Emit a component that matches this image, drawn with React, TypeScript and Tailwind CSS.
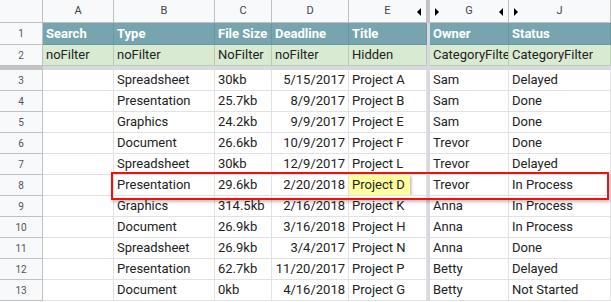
import React from "react";

const cols = [
  { key: "A", w: "w-[71px]" },
  { key: "B", w: "w-[101px]" },
  { key: "C", w: "w-[57px]" },
  { key: "D", w: "w-[77px]" },
  { key: "E", w: "w-[78px]" },
  { key: "G", w: "w-[79px]" },
  { key: "J", w: "w-[102px]" },
];

const rows = [
  ["", "Spreadsheet", "30kb", "5/15/2017", "Project A", "Sam", "Delayed"],
  ["", "Presentation", "25.7kb", "8/9/2017", "Project B", "Sam", "Done"],
  ["", "Graphics", "24.2kb", "9/9/2017", "Project E", "Sam", "Done"],
  ["", "Document", "26.6kb", "10/9/2017", "Project F", "Trevor", "Done"],
  ["", "Spreadsheet", "30kb", "12/9/2017", "Project L", "Trevor", "Delayed"],
  ["", "Presentation", "29.6kb", "2/20/2018", "Project D", "Trevor", "In Process"],
  ["", "Graphics", "314.5kb", "2/16/2018", "Project K", "Anna", "In Process"],
  ["", "Document", "26.9kb", "3/16/2018", "Project H", "Anna", "In Process"],
  ["", "Spreadsheet", "26.9kb", "3/4/2017", "Project N", "Anna", "Done"],
  ["", "Presentation", "62.7kb", "11/20/2017", "Project P", "Betty", "Delayed"],
  ["", "Document", "0kb", "4/16/2018", "Project G", "Betty", "Not Started"],
];

const titles = ["Search", "Type", "File Size", "Deadline", "Title", "Owner", "Status"];
const filters = ["noFilter", "noFilter", "NoFilter", "noFilter", "Hidden", "CategoryFilter", "CategoryFilter"];

function Gap({ dark }: { dark?: boolean }) {
  return <div className={`w-[3px] shrink-0 ${dark ? "bg-[#c4c4c4]" : "bg-[#d6d9e0]"}`} />;
}

function RowNum({ n, h }: { n: number; h: string }) {
  return (
    <div className={`w-[43px] ${h} shrink-0 flex items-center justify-center bg-[#f8f9fa] border-r border-b border-[#c0c0c0] text-[10px] text-[#555]`}>
      {n}
    </div>
  );
}

export default function App() {
  return (
    <div className="relative w-[611px] h-[302px] overflow-hidden bg-white text-[13px] text-[#222]" style={{ fontFamily: "Roboto, Arial, sans-serif" }}>
      {/* column letters */}
      <div className="flex h-[23px]">
        <div className="w-[43px] shrink-0 bg-[#f8f9fa] border-r border-b border-[#c0c0c0]" />
        {cols.map((c, i) => (
          <React.Fragment key={c.key}>
            {i === 5 && <Gap dark />}
            <div className={`${c.w} shrink-0 relative flex items-center justify-center bg-[#f8f9fa] border-r border-b border-[#c0c0c0] text-[11px] text-[#444]`}>
              {c.key}
              {(c.key === "E" || c.key === "G") && (
                <span className="absolute right-[5px] top-[8px] w-0 h-0 border-y-[4px] border-y-transparent border-r-[4px] border-r-black" />
              )}
              {(c.key === "G" || c.key === "J") && (
                <span className="absolute left-[5px] top-[8px] w-0 h-0 border-y-[4px] border-y-transparent border-l-[4px] border-l-black" />
              )}
            </div>
          </React.Fragment>
        ))}
      </div>

      {/* row 1: titles */}
      <div className="flex h-[22px]">
        <RowNum n={1} h="h-[22px]" />
        {cols.map((c, i) => (
          <React.Fragment key={c.key}>
            {i === 5 && <Gap />}
            <div className={`${c.w} shrink-0 flex items-center px-[3px] bg-[#76a5af] border-r border-b border-[#6b97a1] font-bold text-white`}>
              {titles[i]}
            </div>
          </React.Fragment>
        ))}
      </div>

      {/* row 2: filters */}
      <div className="flex h-[21px]">
        <RowNum n={2} h="h-[21px]" />
        {cols.map((c, i) => (
          <React.Fragment key={c.key}>
            {i === 5 && <Gap />}
            <div className={`${c.w} shrink-0 flex items-center pl-[3px] bg-[#d9ead3] border-r border-b border-[#b9cdb3] whitespace-nowrap overflow-hidden`}>
              {filters[i]}
            </div>
          </React.Fragment>
        ))}
      </div>

      {/* frozen divider */}
      <div className="flex h-[4px]">
        <div className="w-[43px] shrink-0 bg-[#c4c4c4]" />
        <div className="flex-1 bg-[#d6d9e0]" />
      </div>

      {/* data rows */}
      {rows.map((r, ri) => (
        <div key={ri} className="flex h-[21px]">
          <RowNum n={ri + 3} h="h-[21px]" />
          {cols.map((c, i) => (
            <React.Fragment key={c.key}>
              {i === 5 && <Gap />}
              <div
                className={`${c.w} shrink-0 flex items-center border-r border-b border-[#e2e2e2] whitespace-nowrap overflow-hidden ${
                  i === 3 ? "justify-end px-[3px]" : "px-[3px]"
                } ${ri === 5 && i === 4 ? "!px-0" : ""}`}
              >
                {ri === 5 && i === 4 ? (
                  <span className="h-[21px] flex items-center px-[3px] w-[61px] bg-[#ffff9c] shadow-[1px_1px_3px_rgba(0,0,0,0.35)]">
                    {r[i]}
                  </span>
                ) : (
                  r[i]
                )}
              </div>
            </React.Fragment>
          ))}
        </div>
      ))}

      {/* highlight box */}
      <div className="absolute left-[111px] top-[172px] w-[498px] h-[28px] border-2 border-[#ee1111] shadow-[1px_2px_3px_rgba(0,0,0,0.25)] pointer-events-none" />
    </div>
  );
}
